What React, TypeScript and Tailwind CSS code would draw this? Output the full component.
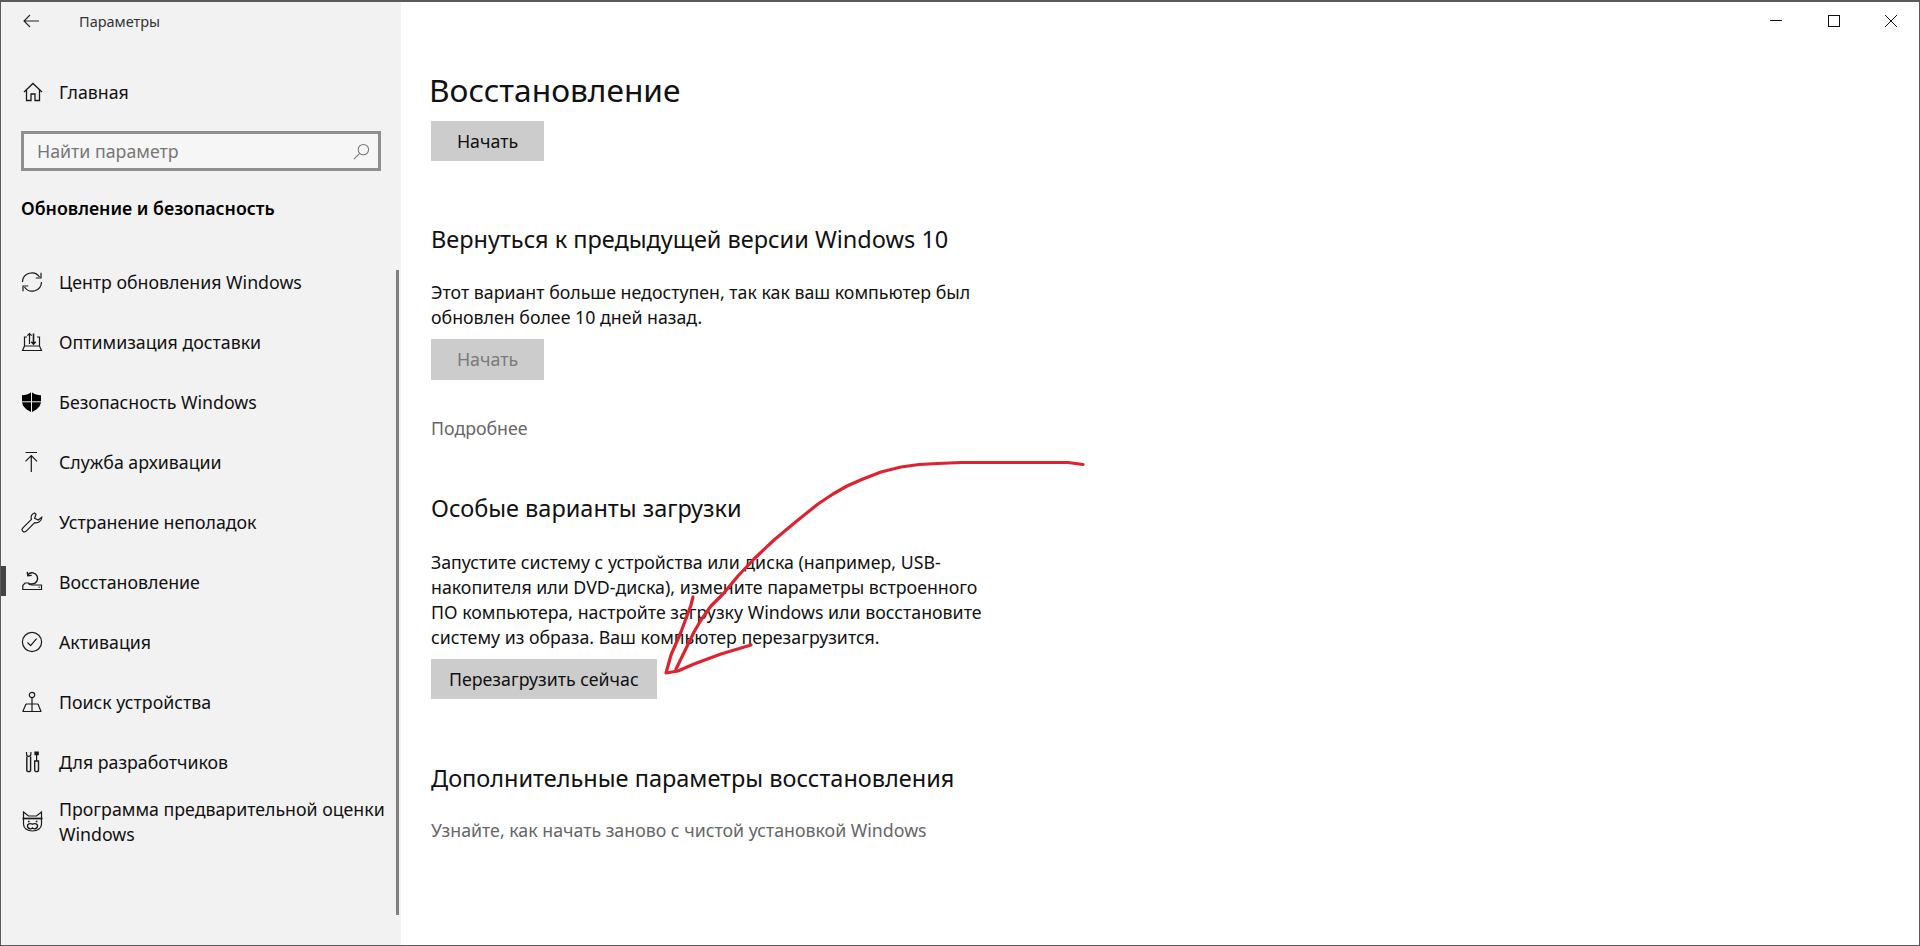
import type { ReactNode } from "react";

// ── Иконки бокового меню ─────────────────────────────

function Ico({ children }: { children: ReactNode }) {
  return (
    <svg
      viewBox="0 0 22 22"
      className="w-[22px] h-[22px] shrink-0"
      fill="none"
      stroke="#1a1a1a"
      strokeWidth="1.2"
    >
      {children}
    </svg>
  );
}

const items: { label: ReactNode; icon: ReactNode; active?: boolean }[] = [
  {
    label: "Центр обновления Windows",
    icon: (
      <Ico>
        <path d="M1.5 11A9.3 9.3 0 0 1 18.5 6" />
        <path d="M20 1.8V7H14.8" />
        <path d="M20.5 11A9.3 9.3 0 0 1 3.5 16" />
        <path d="M2 20.2V15H7.2" />
      </Ico>
    ),
  },
  {
    label: "Оптимизация доставки",
    icon: (
      <Ico>
        <path d="M3.5 15V6H6M16 6H18.5V15" />
        <path d="M3.5 15L1.5 19.5H20.5L18.5 15Z" />
        <path d="M8.5 13V2.5M6.3 4.7L8.5 2.5L10.7 4.7" />
        <path d="M12.5 2.5V13M10.3 10.8L12.5 13L14.7 10.8" strokeWidth="1.6" />
      </Ico>
    ),
  },
  {
    label: "Безопасность Windows",
    icon: (
      <Ico>
        <path
          d="M10.5 1C13.5 3.2 16.5 4.2 20 4.3V10C20 15.5 15.5 19 10.5 21.2C5.5 19 1 15.5 1 10V4.3C4.5 4.2 7.5 3.2 10.5 1Z"
          fill="#000"
          stroke="none"
        />
        <path d="M10.5 1V21.5M0.5 10.8H20.5" stroke="#f2f2f2" strokeWidth="1" />
      </Ico>
    ),
  },
  {
    label: "Служба архивации",
    icon: (
      <Ico>
        <path d="M4.5 1.5H16M10.3 4.5V21M4.5 10.3L10.3 4.5L16 10.3" />
      </Ico>
    ),
  },
  {
    label: "Устранение неполадок",
    icon: (
      <Ico>
        <path d="M13.4 2C10.8 2.6 9.6 5.4 10.4 8.3L1.9 16.8C0.8 17.9 1 19.3 1.8 20.2C2.7 21 4.1 21.2 5.2 20.1L13.7 11.6C16.8 12.4 20.6 10.4 20.8 6.2L17.2 9L13.6 7.2L15 3.2Z" />
      </Ico>
    ),
  },
  {
    label: "Восстановление",
    active: true,
    icon: (
      <Ico>
        <path d="M7 3.5A5.6 5.6 0 1 1 11 13H7.5" strokeWidth="1.4" />
        <path d="M6.3 0.8L6.8 4.7L10.7 4.4" strokeWidth="1.4" />
        <path d="M1.8 18.5V14.5L4 12H7.5C8 13.5 9.5 14 11 14H20.5V18.5Z" />
        <path d="M17.5 16.2H18.7" />
      </Ico>
    ),
  },
  {
    label: "Активация",
    icon: (
      <Ico>
        <circle cx="11" cy="11" r="9.6" />
        <path d="M6.5 11.5L9.6 14.6L15.6 7.6" />
      </Ico>
    ),
  },
  {
    label: "Поиск устройства",
    icon: (
      <Ico>
        <circle cx="11" cy="4" r="2.7" />
        <path d="M11 6.8V20.5M5 13H17M1.8 20.5L5 13M17 13L20 20.5M1.5 20.5H20.5" />
      </Ico>
    ),
  },
  {
    label: "Для разработчиков",
    icon: (
      <Ico>
        <path d="M5.5 1V3C5.5 4.6 6.4 5.4 7.7 5.4C9 5.4 9.9 4.6 9.9 3V1" />
        <path d="M5.8 5.4V19C5.8 21.2 9.6 21.2 9.6 19V5.4" strokeWidth="1.4" />
        <path d="M14 1H17.2V3.6H14Z" fill="#1a1a1a" />
        <path d="M15.6 3.6V10" />
        <path d="M13.7 10H17.5V19C17.5 21.2 13.7 21.2 13.7 19Z" strokeWidth="1.4" />
      </Ico>
    ),
  },
  {
    label: (
      <>
        Программа предварительной оценки
        <br />
        Windows
      </>
    ),
    icon: (
      <Ico>
        <path d="M2.5 13V1L7.5 5H15.5L20.5 1V13C20.5 17 17 20 11.5 20C6 20 2.5 17 2.5 13Z" />
        <path d="M1.5 7.5H21.5" strokeWidth="1.7" />
        <path d="M7.8 9.8V11.3M15.6 9.8V11.3" strokeWidth="1.7" />
        <path d="M11.5 13.2C9 12 6 13 6.5 15.5C7 18 10 18.5 11.5 17C13 18.5 16 18 16.5 15.5C17 13 14 12 11.5 13.2Z" strokeWidth="1.4" />
      </Ico>
    ),
  },
];

function Boton({ children, off }: { children: ReactNode; off?: boolean }) {
  return (
    <div
      className={`px-[18px] min-w-[113px] w-fit flex items-center justify-center bg-[#cccccc] ${
        off ? "h-[41px] text-[#7a7a7a]" : "h-10 text-[#111111]"
      }`}
    >
      {children}
    </div>
  );
}

export default function App() {
  return (
    <div
      className="relative h-screen flex overflow-hidden bg-white border border-[#5a5a5a] border-t-2 text-[17.75px] leading-[25px] text-[#111111]"
      style={{ fontFamily: '"Noto Sans", "Open Sans", sans-serif' }}
    >
      {/* Боковое меню */}
      <aside className="relative w-[400px] shrink-0 bg-[#f2f2f2]">
        <div className="h-[38px] flex items-center pl-[22px]">
          <svg viewBox="0 0 16 14" className="w-4 h-[14px]" fill="none" stroke="#222222" strokeWidth="1.1">
            <path d="M16 7H1M7 1L1 7L7 13" />
          </svg>
          <span className="ml-[40px] text-[14.5px] text-[#333333]">Параметры</span>
        </div>

        <div className="mt-[22px] h-[60px] flex items-center pl-[22px]">
          <svg viewBox="0 0 20 20" className="w-5 h-5 mr-[16px]" fill="none" stroke="#1a1a1a" strokeWidth="1.3">
            <path d="M1 10L10 1.5L19 10M3.5 8V18.5H8V12H12V18.5H16.5V8" />
          </svg>
          Главная
        </div>

        <div className="mt-[9px] ml-[20px] w-[360px] h-10 border-[3px] border-[#8f8f8f] bg-[#f6f6f6] flex items-center justify-between pl-[13px] pr-[8px] text-[#777777]">
          Найти параметр
          <svg viewBox="0 0 18 18" className="w-[17px] h-[17px]" fill="none" stroke="#777777" strokeWidth="1.1">
            <circle cx="11" cy="7" r="5.5" />
            <path d="M7 11L1 17" />
          </svg>
        </div>

        <div className="mt-[25px] ml-[20px] h-[25px] font-semibold text-black">
          Обновление и безопасность
        </div>

        <nav className="mt-[31px]">
          {items.map((it, i) => (
            <div key={i} className="relative h-[60px] flex items-center pl-[20px] gap-[16px]">
              {it.active && <span className="absolute left-0 top-[14px] w-[5px] h-[30px] bg-[#444444]" />}
              {it.icon}
              <span className="whitespace-nowrap">{it.label}</span>
            </div>
          ))}
        </nav>

        <div className="absolute left-[395px] top-[268px] w-[3px] h-[645px] bg-[#808080]" />
      </aside>

      {/* Контент */}
      <main className="flex-1 pl-[30px] pt-[59px]">
        <h1 className="h-[60px] leading-[58px] -ml-[2px] text-[31.7px] text-[#111111]">Восстановление</h1>
        <Boton>Начать</Boton>

        <h2 className="mt-[59px] h-10 leading-[38px] text-[23.5px]">Вернуться к предыдущей версии Windows 10</h2>
        <p className="mt-[20px]">
          Этот вариант больше недоступен, так как ваш компьютер был
          <br />
          обновлен более 10 дней назад.
        </p>
        <div className="mt-[9px]">
          <Boton off>Начать</Boton>
        </div>
        <p className="mt-[36px] text-[#666666]">Подробнее</p>

        <h2 className="mt-[48px] h-10 leading-[38px] text-[23.5px]">Особые варианты загрузки</h2>
        <p className="mt-[21px]">
          Запустите систему с устройства или диска (например, USB-
          <br />
          накопителя или DVD-диска), измените параметры встроенного
          <br />
          ПО компьютера, настройте загрузку Windows или восстановите
          <br />
          систему из образа. Ваш компьютер перезагрузится.
        </p>
        <div className="mt-[9px]">
          <Boton>Перезагрузить сейчас</Boton>
        </div>

        <h2 className="mt-[60px] h-10 leading-[38px] text-[23.5px]">Дополнительные параметры восстановления</h2>
        <p className="mt-[19px] text-[#666666]">Узнайте, как начать заново с чистой установкой Windows</p>
      </main>

      {/* Кнопки окна */}
      <svg className="absolute left-[1769px] top-[12px] w-[128px] h-[14px]" viewBox="0 0 128 14" fill="none" stroke="#111111" strokeWidth="1">
        <path d="M0 6.5H12" />
        <rect x="58.5" y="1.5" width="11" height="11" />
        <path d="M115 1L127 13M127 1L115 13" />
      </svg>

      {/* Красная стрелка поверх окна */}
      <svg className="absolute left-0 top-0 w-[1920px] h-[946px] pointer-events-none" viewBox="0 0 1920 946" fill="none" stroke="#dc2430" strokeWidth="3.2" strokeLinejoin="round" strokeLinecap="round">
        <path d="M1082 462.5L1067 460.5L960 460.5L937 461.5L918 462.5L900 465L880 470L862 477L846 484L832 492L817 502L797 518L773 538L753 557L737 574L722 592L710 604L700 618L693 630L677 663L675 667" />
        <path d="M692 595L690 603L680 630L670 653L665 671L677 669L693 662L720 652L750 643" />
      </svg>
    </div>
  );
}
